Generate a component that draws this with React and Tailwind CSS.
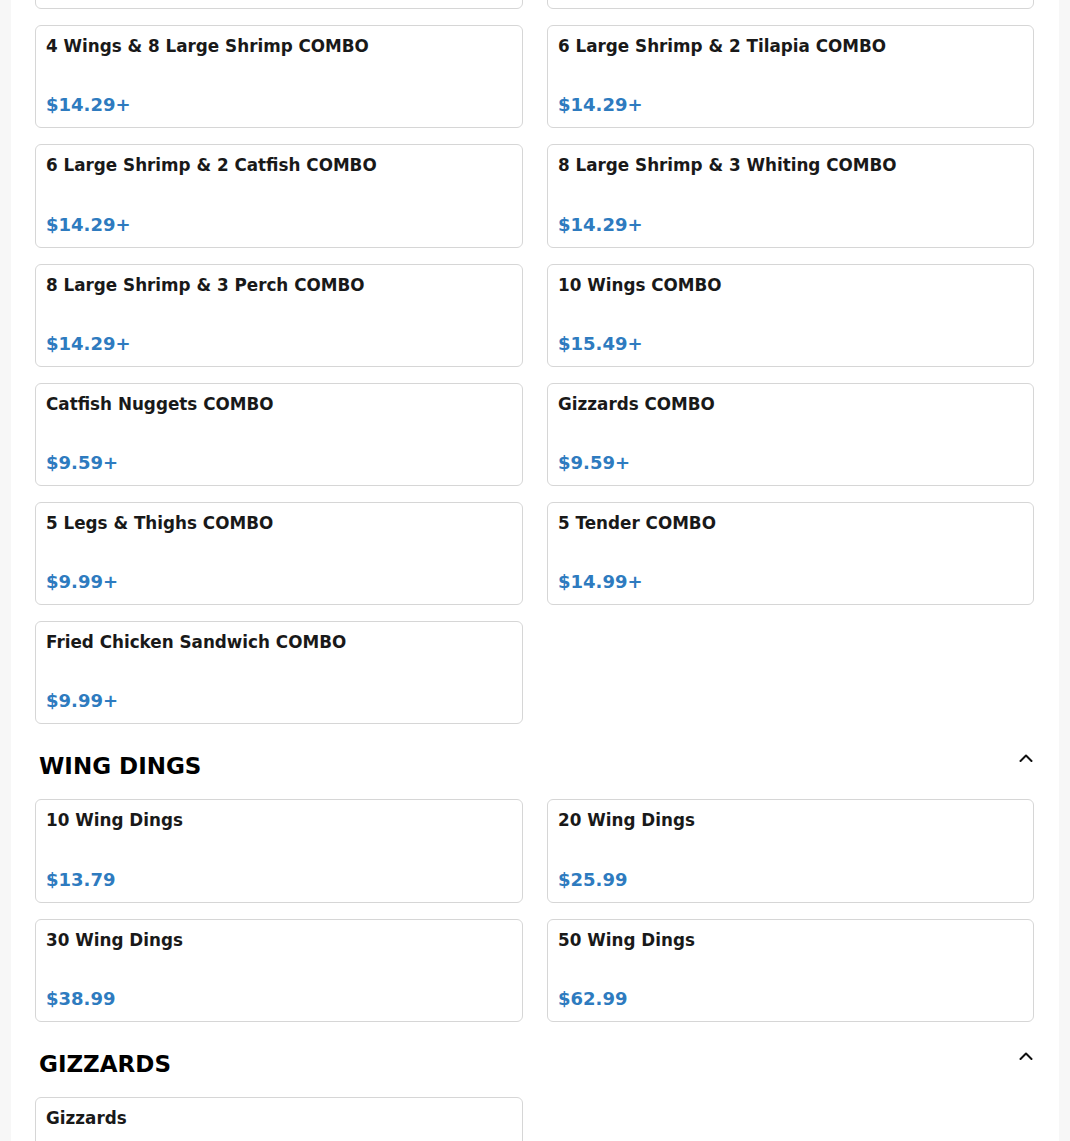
const combos = [
    {name: '4 Wings & 6 Catfish COMBO', price: '$14.29+'},
    {name: '8 Wings & 4 Catfish COMBO', price: '$14.29+'},
    {name: '4 Wings & 8 Large Shrimp COMBO', price: '$14.29+'},
    {name: '6 Large Shrimp & 2 Tilapia COMBO', price: '$14.29+'},
    {name: '6 Large Shrimp & 2 Catfish COMBO', price: '$14.29+'},
    {name: '8 Large Shrimp & 3 Whiting COMBO', price: '$14.29+'},
    {name: '8 Large Shrimp & 3 Perch COMBO', price: '$14.29+'},
    {name: '10 Wings COMBO', price: '$15.49+'},
    {name: 'Catfish Nuggets COMBO', price: '$9.59+'},
    {name: 'Gizzards COMBO', price: '$9.59+'},
    {name: '5 Legs & Thighs COMBO', price: '$9.99+'},
    {name: '5 Tender COMBO', price: '$14.99+'},
    {name: 'Fried Chicken Sandwich COMBO', price: '$9.99+'},
];

const wingDings = [
    {name: '10 Wing Dings', price: '$13.79'},
    {name: '20 Wing Dings', price: '$25.99'},
    {name: '30 Wing Dings', price: '$38.99'},
    {name: '50 Wing Dings', price: '$62.99'},
];

const gizzards = [
    {name: 'Gizzards', price: '$9.59'},
];

function ChevronUpIcon() {
    return (
        <svg width="14" height="8" viewBox="0 0 14 8" fill="none" className="mt-[6px] mr-[1px]">
            <path d="M1.5 7 L7 1.5 L12.5 7" stroke="#111" strokeWidth="2" strokeLinecap="round" strokeLinejoin="round"/>
        </svg>
    );
}

function ItemCard({item}) {
    return (
        <div className="h-[103.2px] rounded-md border border-[#d6d6d6] bg-white px-[10px] pt-[8px] pb-[10px] flex flex-col justify-between">
            <p className="text-[16.8px] leading-[24px] font-bold text-[#191919]">{item.name}</p>
            <p className="text-[18px] leading-[24px] font-bold text-[#2e7bbf]">{item.price}</p>
        </div>
    );
}

function Section({title, items}) {
    return (
        <section>
            {title && (
                <div className="flex items-start justify-between pl-1 pt-[24px] pb-[15px]">
                    <h2 className="text-[23px] leading-[36px] font-bold text-black">{title}</h2>
                    <ChevronUpIcon/>
                </div>
            )}
            <div className="grid grid-cols-[488px_487px] gap-x-[24px] gap-y-[16px]">
                {items.map((item) => (
                    <ItemCard key={item.name} item={item}/>
                ))}
            </div>
        </section>
    );
}

export default function App() {
    return (
        <div className="min-h-screen bg-[#f7f7f7] overflow-hidden" style={{fontFamily: '"DejaVu Sans", sans-serif'}}>
            <div className="mx-auto w-[1048px] bg-white pl-6 pr-[25px] pb-10 -mt-[94px]">
                <Section items={combos}/>
                <Section title="WING DINGS" items={wingDings}/>
                <Section title="GIZZARDS" items={gizzards}/>
            </div>
        </div>
    );
}
